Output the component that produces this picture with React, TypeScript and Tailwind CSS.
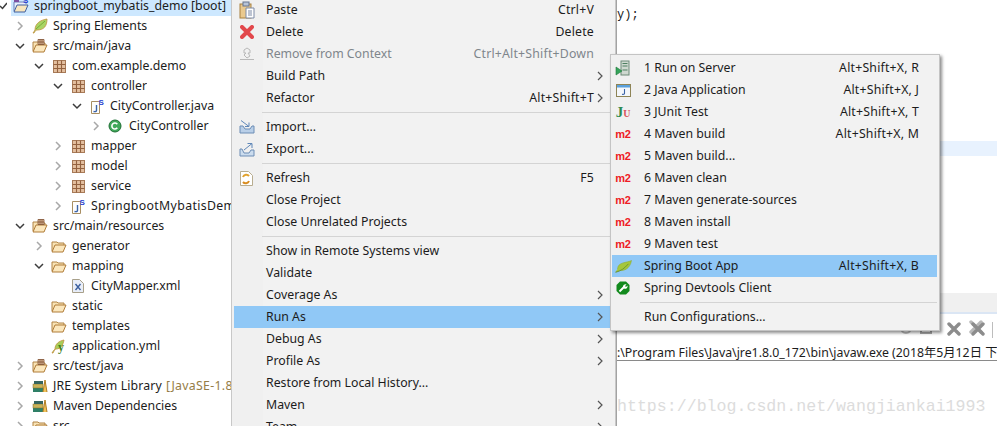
import React from "react";

const Chev = ({ open }: { open?: boolean }) => (
  <svg width="10" height="10" viewBox="0 0 10 10" fill="none" stroke={open ? "#3c3c3c" : "#a8a8a8"} strokeWidth="1.5">
    {open ? <polyline points="1,3 5,7 9,3" /> : <polyline points="3,1 7,5 3,9" />}
  </svg>
);

const Pkg = () => (
  <svg width="13" height="13" viewBox="0 0 13 13">
    <rect x="0.5" y="0.5" width="12" height="12" fill="#e3bf9f" stroke="#a77a58" strokeWidth="1" />
    <path d="M4.5 0.5v12M8.5 0.5v12M0.5 4.5h12M0.5 8.5h12" stroke="#94623f" strokeWidth="1.1" />
  </svg>
);
const OpenFolder = ({ grid }: { grid?: boolean }) => (
  <svg width="16" height="16" viewBox="0 0 16 16">
    <path d="M1 13V4h5l1 1h6v2" fill="#f8e2b4" stroke="#b08344" />
    <path d="M1 14l3-7h11l-3 7z" fill="#fbe7bd" stroke="#b07c38" strokeLinejoin="round" />
    {grid && <path d="M6 1.5h6v5H6zM8 1.5v5M10 1.5v5M6 4h6" fill="#e6c7a6" stroke="#7d4f30" strokeWidth="0.8" />}
  </svg>
);
const JFile = ({ s = true }: { s?: boolean }) => (
  <svg width="16" height="16" viewBox="0 0 16 16">
    <path d="M2.5 3.5h8v12h-8z" fill="#fdfdfd" stroke="#a88e62" />
    <path d="M7.5 7v5.5q0 1.5-3 1" fill="none" stroke="#3a63a8" strokeWidth="1.4" />
    {s && <text x="9.5" y="6.5" fontSize="8" fontWeight="700" fill="#2a3fd0" fontFamily="Liberation Sans, sans-serif">S</text>}
  </svg>
);
const ClassIcon = () => (
  <svg width="16" height="16" viewBox="0 0 16 16">
    <circle cx="7" cy="8" r="6" fill="#41a85a" stroke="#1f6f35" />
    <path d="M9.3 6.2a3 3 0 1 0 0 3.6" fill="none" stroke="#fff" strokeWidth="1.6" />
  </svg>
);
const Leaf = () => (
  <svg width="16" height="16" viewBox="0 0 16 16">
    <path d="M1 15c1-1 1-2 2-3C3 5 9 2 15 1c0 7-3 11-10 11-1 0-2 1-3 3z" fill="#a9d564" stroke="#c28f3c" strokeWidth="0.8" />
    <path d="M4 11c3-3 6-5 9-8" stroke="#6e9c2c" strokeWidth="0.8" fill="none" />
  </svg>
);
const ProjectIcon = () => (
  <svg width="17" height="18" viewBox="0 0 17 18">
    <path d="M1 14V5h12v2" fill="#e8eefc" stroke="#6a7fb8" />
    <path d="M1 15l3-7h11l-3 7z" fill="#f8e6bd" stroke="#3f5f9f" strokeLinejoin="round" />
    <rect x="1" y="1" width="5" height="4" fill="#7d4fa0" />
    <text x="10" y="6" fontSize="8" fontWeight="700" fill="#2a3fd0" fontFamily="Liberation Sans, sans-serif">S</text>
  </svg>
);
const XmlIcon = () => (
  <svg width="14" height="16" viewBox="0 0 14 16">
    <path d="M1.5 1.5h7l4 4v9h-11z" fill="#e9eef8" stroke="#a8a08a" />
    <path d="M4.5 6l5 6M9.5 6l-5 6" stroke="#3b5f9e" strokeWidth="1.4" />
  </svg>
);
const Yml = () => (
  <svg width="16" height="16" viewBox="0 0 16 16">
    <path d="M1 15c1-2 2-3 3-4 0-5 4-8 9-9-1 5-3 9-8 9-1 0-2 2-3 4z" fill="#a6cf5a" stroke="#c28f3c" strokeWidth="0.8" />
    <text x="7" y="13" fontSize="12" fontWeight="700" fill="#3f7f1f" fontFamily="Liberation Serif, serif">y</text>
  </svg>
);
const Lib = () => (
  <svg width="16" height="16" viewBox="0 0 16 16">
    <rect x="1" y="10" width="10" height="4" fill="#2f7f66" />
    <rect x="1" y="6" width="10" height="4" fill="#c9b35a" stroke="#806b2c" strokeWidth="0.5" />
    <rect x="2" y="3" width="9" height="3" fill="#35645f" />
    <path d="M11 14L13 2l2 12" fill="#f0c15a" stroke="#b07c20" />
  </svg>
);

const Paste = () => (
  <svg width="16" height="18" viewBox="0 0 16 18">
    <rect x="1" y="3" width="11" height="14" fill="#eac98e" stroke="#a8803e" />
    <rect x="4" y="1" width="6" height="4" fill="#b8c4d8" stroke="#66758f" />
    <path d="M7 7h8v10H7z" fill="#fff" stroke="#7d8aa6" />
    <path d="M9 10h4M9 12h4M9 14h4" stroke="#7d8aa6" />
  </svg>
);
const RedX = () => (
  <svg width="14" height="14" viewBox="0 0 14 14">
    <path d="M2 2l10 10M12 2L2 12" stroke="#e2474b" strokeWidth="4" strokeLinecap="round" />
  </svg>
);
const Removed = () => (
  <svg width="16" height="14" viewBox="0 0 16 14" fill="none" stroke="#b8b8b8">
    <path d="M1 12.5h14" />
    <path d="M5 3l3-2 3 2v3h-2l2 3-3 2-3-3 2-2H5z" />
  </svg>
);
const Import = () => (
  <svg width="16" height="14" viewBox="0 0 16 14">
    <path d="M1 6h3l2 3h5l2-3h2v7H1z" fill="#b9cfe8" stroke="#6d8db5" />
    <path d="M2 0.5l8 6M10 2.5v4H6" fill="none" stroke="#5f87b8" />
  </svg>
);
const Export = () => (
  <svg width="16" height="15" viewBox="0 0 16 15">
    <path d="M1 7v7h14V8h-3l-2 3H5L3 7z" fill="#cbdcee" stroke="#6d8db5" />
    <path d="M5 8l8-6.5M8.5 1.5H13V6" fill="none" stroke="#5f87b8" />
  </svg>
);
const Refresh = () => (
  <svg width="15" height="17" viewBox="0 0 15 17">
    <path d="M1.5 1.5h8l4 4v10h-12z" fill="#fff" stroke="#b8ad90" />
    <path d="M4 7a3.5 3.5 0 0 1 6-1" fill="none" stroke="#e2a22c" strokeWidth="2" />
    <path d="M10 11a3.5 3.5 0 0 1-6 1" fill="none" stroke="#d98c1f" strokeWidth="2" />
  </svg>
);

const Server = () => (
  <svg width="16" height="16" viewBox="0 0 16 16">
    <rect x="6" y="1" width="8" height="14" fill="#cfd8d0" stroke="#6d8a78" />
    <path d="M7.5 3.5h5M7.5 6h5M7.5 10h5" stroke="#4c7f60" />
    <path d="M1 7l6 4-6 4z" fill="#35a35a" stroke="#1f7a3a" strokeWidth="0.6" />
  </svg>
);
const JavaApp = () => (
  <svg width="15" height="13" viewBox="0 0 15 13">
    <rect x="0.5" y="0.5" width="14" height="12" fill="#f4f7fb" stroke="#8e8456" />
    <rect x="1" y="1" width="13" height="2.5" fill="#5aa0dc" />
    <path d="M8.5 5v4.5q0 1-2.5 .8" fill="none" stroke="#3a63a8" strokeWidth="1.1" />
  </svg>
);
const JUnit = () => (
  <span className="flex items-baseline font-['Liberation_Serif',serif] font-bold leading-none">
    <span className="text-[15px] text-[#2c8a4e]">J</span>
    <span className="text-[10px] text-[#d8545c]">U</span>
  </span>
);
const M2 = () => (
  <span className="font-['Liberation_Sans',sans-serif] text-[11px] font-bold leading-none tracking-[-0.3px] text-[#ee1c25]">m2</span>
);
const SpringLeaf = () => (
  <svg width="17" height="13" viewBox="0 0 17 13">
    <path d="M0.5 12c2-.5 3-1 4-1.5C9 11 15 9 16.5 0.5 12 3 3 1.5 2.5 9" fill="#a5c73c" stroke="#8aa82e" strokeWidth="0.5" />
    <path d="M0.5 12.3c5-1 9-4 13-8.5" fill="none" stroke="#5f8a2a" strokeWidth="0.8" />
  </svg>
);
const Devtools = () => (
  <svg width="14" height="14" viewBox="0 0 14 14">
    <path d="M4 0.5h6L13.5 4v6L10 13.5H4L0.5 10V4z" fill="#128a1d" />
    <path d="M3.5 10.5L8 6" stroke="#fff" strokeWidth="2" />
    <path d="M7 6.5a2.6 2.6 0 0 1 3.6-3L9 5l1 1 1.5-1.5a2.6 2.6 0 0 1-3 3.3z" fill="#fff" />
  </svg>
);

type T = { d: number; t: string; icon: React.ReactNode; c?: "o" | "c"; extra?: string; cls?: string };
const tree: T[] = [
  { d: 1, t: "Spring Elements", icon: <Leaf />, c: "c" },
  { d: 1, t: "src/main/java", icon: <OpenFolder grid />, c: "o" },
  { d: 2, t: "com.example.demo", icon: <Pkg />, c: "o" },
  { d: 3, t: "controller", icon: <Pkg />, c: "o" },
  { d: 4, t: "CityController.java", icon: <JFile />, c: "o" },
  { d: 5, t: "CityController", icon: <ClassIcon />, c: "c" },
  { d: 3, t: "mapper", icon: <Pkg />, c: "c" },
  { d: 3, t: "model", icon: <Pkg />, c: "c" },
  { d: 3, t: "service", icon: <Pkg />, c: "c" },
  { d: 3, t: "SpringbootMybatisDemoApplication.java", icon: <JFile />, c: "c", cls: "tracking-[0.35px]" },
  { d: 1, t: "src/main/resources", icon: <OpenFolder grid />, c: "o" },
  { d: 2, t: "generator", icon: <OpenFolder />, c: "c" },
  { d: 2, t: "mapping", icon: <OpenFolder />, c: "o" },
  { d: 3, t: "CityMapper.xml", icon: <XmlIcon /> },
  { d: 2, t: "static", icon: <OpenFolder /> },
  { d: 2, t: "templates", icon: <OpenFolder /> },
  { d: 2, t: "application.yml", icon: <Yml /> },
  { d: 1, t: "src/test/java", icon: <OpenFolder grid />, c: "c" },
  { d: 1, t: "JRE System Library", icon: <Lib />, c: "c", extra: "[JavaSE-1.8]", cls: "tracking-[0.15px]" },
  { d: 1, t: "Maven Dependencies", icon: <Lib />, c: "c" },
  { d: 1, t: "src", icon: <OpenFolder />, c: "c" },
];
const pad = ["pl-0", "pl-[15px]", "pl-[34px]", "pl-[53px]", "pl-[72px]", "pl-[91px]"];

const TreeRow = ({ r }: { r: T }) => (
  <div className={`flex h-[20px] items-center overflow-hidden whitespace-nowrap ${pad[r.d]}`}>
    <span className="flex w-[10px] shrink-0 justify-center">{r.c && <Chev open={r.c === "o"} />}</span>
    <span className="ml-[7px] flex w-[16px] shrink-0 justify-center">{r.icon}</span>
    <span className={`ml-[5px] ${r.extra ? "shrink-0" : "min-w-0 overflow-hidden py-[2px]"} ${r.cls ?? ""}`}>{r.t}</span>
    {r.extra && <span className="ml-[4px] min-w-0 overflow-hidden py-[2px] tracking-[0.3px] text-[#957d47]">{r.extra}</span>}
  </div>
);

type M = { t?: string; k?: string; a?: boolean; icon?: React.ReactNode; sel?: boolean; off?: boolean; sep?: boolean };
const sep: M = { sep: true };
const menu: M[] = [
  { t: "Paste", k: "Ctrl+V", icon: <Paste /> },
  { t: "Delete", k: "Delete", icon: <RedX /> },
  { t: "Remove from Context", k: "Ctrl+Alt+Shift+Down", icon: <Removed />, off: true },
  { t: "Build Path", a: true },
  { t: "Refactor", k: "Alt+Shift+T", a: true },
  sep,
  { t: "Import...", icon: <Import /> },
  { t: "Export...", icon: <Export /> },
  sep,
  { t: "Refresh", k: "F5", icon: <Refresh /> },
  { t: "Close Project" },
  { t: "Close Unrelated Projects" },
  sep,
  { t: "Show in Remote Systems view" },
  { t: "Validate" },
  { t: "Coverage As", a: true },
  { t: "Run As", a: true, sel: true },
  { t: "Debug As", a: true },
  { t: "Profile As", a: true },
  { t: "Restore from Local History..." },
  { t: "Maven", a: true },
  { t: "Team", a: true },
];
const sub: M[] = [
  { t: "1 Run on Server", k: "Alt+Shift+X, R", icon: <Server /> },
  { t: "2 Java Application", k: "Alt+Shift+X, J", icon: <JavaApp /> },
  { t: "3 JUnit Test", k: "Alt+Shift+X, T", icon: <JUnit /> },
  { t: "4 Maven build", k: "Alt+Shift+X, M", icon: <M2 /> },
  { t: "5 Maven build...", icon: <M2 /> },
  { t: "6 Maven clean", icon: <M2 /> },
  { t: "7 Maven generate-sources", icon: <M2 /> },
  { t: "8 Maven install", icon: <M2 /> },
  { t: "9 Maven test", icon: <M2 /> },
  { t: "Spring Boot App", k: "Alt+Shift+X, B", icon: <SpringLeaf />, sel: true },
  { t: "Spring Devtools Client", icon: <Devtools /> },
  sep,
  { t: "Run Configurations..." },
];

const Row = ({ m, main }: { m: M; main: boolean }) => {
  if (m.sep)
    return (
      <div className="flex h-[7px] items-center pl-[28px]">
        <div className="h-[1px] flex-1 bg-[#d4d4d4]" />
      </div>
    );
  return (
    <div
      className={`flex h-[22px] items-center whitespace-nowrap ${m.sel ? "bg-[#90c8f6]" : ""} ${m.off ? "text-[#7f868c]" : ""}`}
    >
      <span className={`flex h-full shrink-0 items-center justify-center ${main ? "w-[25px]" : "w-[22px]"}`}>{m.icon}</span>
      <span className={`pt-[1px] ${main ? "ml-[7px]" : "ml-[10px]"}`}>{m.t}</span>
      {m.k && <span className="ml-auto pt-[1px] tracking-[0.2px]">{m.k}</span>}
      {main ? (
        <span className={`flex w-[19px] shrink-0 pl-[3px] ${m.k ? "" : "ml-auto"}`}>
          {m.a && (
            <svg width="6" height="10" viewBox="0 0 6 10" fill="none" stroke="#555" strokeWidth="1.2">
              <polyline points="1,1 5,5 1,9" />
            </svg>
          )}
        </span>
      ) : (
        <span className="w-[18px] shrink-0" />
      )}
    </div>
  );
};

const GrayX = () => (
  <svg width="14" height="14" viewBox="0 0 14 14">
    <path d="M2 2l10 10M12 2L2 12" stroke="#8c8c8c" strokeWidth="3.4" strokeLinecap="round" />
  </svg>
);

export default function App() {
  return (
    <div className="relative flex h-[426px] w-[997px] overflow-hidden bg-white font-['Noto_Sans','Noto_Sans_CJK_SC',sans-serif] text-[12.3px] leading-none text-[#1c1c1c]">
      <aside className="h-full w-[231px] shrink-0 overflow-hidden">
        <div className="-mt-[4px]">
          <div className="flex h-[20px] items-center whitespace-nowrap">
            <span className="w-[11px] shrink-0">
              <svg width="7" height="8" viewBox="0 0 7 8" fill="none" stroke="#3c3c3c" strokeWidth="1.5">
                <polyline points="0,4 2.5,6.5 7,1" />
              </svg>
            </span>
            <div className="flex h-full flex-1 items-center bg-[#cde8ff]">
              <span className="ml-[2px] flex w-[17px] shrink-0 justify-center"><ProjectIcon /></span>
              <span className="ml-[4px]">springboot_mybatis_demo [boot]</span>
            </div>
          </div>
          {tree.map((r) => (
            <TreeRow key={r.t} r={r} />
          ))}
        </div>
      </aside>

      <main className="ml-[384px] flex h-full flex-1 flex-col border-l-2 border-[#a3a3a3]">
        <div className="flex h-[293px] flex-col">
          <div className="mt-[7px] h-[16px] font-['Liberation_Mono',monospace] text-[12px] leading-[16px]">y);</div>
          <div className="mt-[118px] h-[15px] bg-[#e8f2fe]" />
        </div>
        <div className="h-[19px] bg-[#f0f0f0]" />
        <div className="h-[2px] bg-[#dbe6f4]" />
        <div className="flex h-[28px] items-start bg-white pt-[8px]">
          <span className="ml-[283px] h-[12px] w-[12px] rounded-full border-2 border-[#bdbdbd]" />
          <span className="ml-[8px] h-[12px] w-[12px] border-2 border-[#a8a8a8]" />
          <span className="ml-[15px]"><GrayX /></span>
          <span className="relative ml-[10px]">
            <GrayX />
            <span className="absolute -left-[2px] -top-[2px] opacity-60"><GrayX /></span>
          </span>
          <span className="ml-[7px] h-[16px] w-[1px] bg-[#bdbdbd]" />
        </div>
        <div className="flex h-[19px] items-center overflow-hidden whitespace-nowrap border-b border-[#8a8a8a] pt-[4px]">
          :\Program Files\Java\jre1.8.0_172\bin\javaw.exe (2018年5月12日 下午
        </div>
      </main>

      <div className="absolute left-[231px] top-0 h-full w-[385px] overflow-hidden border-x border-x-[#c8c8c8] bg-[linear-gradient(90deg,#f0f0f0_31px,#f2f2f2_31px)] px-[2px]">
        <div className="-mt-[1px]">
          {menu.map((m, i) => (
            <Row key={i} m={m} main />
          ))}
        </div>
      </div>

      <div className="absolute left-[610px] top-[54px] h-[277px] w-[330px] border border-[#c4c4c4] bg-[linear-gradient(90deg,#f0f0f0_29px,#f2f2f2_29px)] pl-[1px] pr-[2px] pt-[2px] shadow-[2px_2px_3px_rgba(0,0,0,0.45)]">
        {sub.map((m, i) => (
          <Row key={i} m={m} main={false} />
        ))}
      </div>

      <div className="pointer-events-none absolute left-[617px] top-[399px] whitespace-nowrap font-['Liberation_Mono',monospace] text-[16.6px] leading-none text-[#dcdcdc]">
        https://blog.csdn.net/wangjiankai1993
      </div>
    </div>
  );
}
